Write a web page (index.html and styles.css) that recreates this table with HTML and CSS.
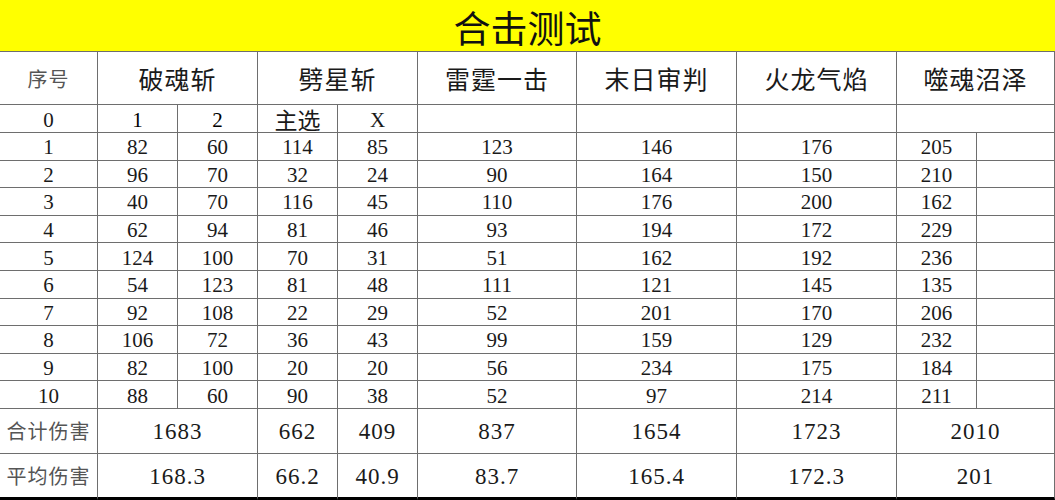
FILE: index.html
```html
<!DOCTYPE html>
<html lang="zh">
<head>
<meta charset="utf-8">
<title>合击测试</title>
<link rel="stylesheet" href="styles.css">
</head>
<body>
<div class="sheet">
  <div class="title">合击测试</div>
  <div class="grid">
    <div class="c lbl">序号</div>
    <div class="c hd s2">破魂斩</div>
    <div class="c hd s2">劈星斩</div>
    <div class="c hd">雷霆一击</div>
    <div class="c hd">末日审判</div>
    <div class="c hd">火龙气焰</div>
    <div class="c hd s2">噬魂沼泽</div>

    <div class="c n">0</div>
    <div class="c n b">1</div>
    <div class="c n b">2</div>
    <div class="c sub">主选</div>
    <div class="c n">X</div>
    <div class="c"></div>
    <div class="c"></div>
    <div class="c"></div>
    <div class="c s2"></div>

    <div class="c n">1</div><div class="c n">82</div><div class="c n">60</div><div class="c n">114</div><div class="c n">85</div><div class="c n">123</div><div class="c n">146</div><div class="c n">176</div><div class="c n">205</div><div class="c"></div>
    <div class="c n">2</div><div class="c n">96</div><div class="c n">70</div><div class="c n">32</div><div class="c n">24</div><div class="c n">90</div><div class="c n">164</div><div class="c n">150</div><div class="c n">210</div><div class="c"></div>
    <div class="c n">3</div><div class="c n">40</div><div class="c n">70</div><div class="c n">116</div><div class="c n">45</div><div class="c n">110</div><div class="c n">176</div><div class="c n">200</div><div class="c n">162</div><div class="c"></div>
    <div class="c n">4</div><div class="c n">62</div><div class="c n">94</div><div class="c n">81</div><div class="c n">46</div><div class="c n">93</div><div class="c n">194</div><div class="c n">172</div><div class="c n">229</div><div class="c"></div>
    <div class="c n">5</div><div class="c n">124</div><div class="c n">100</div><div class="c n">70</div><div class="c n">31</div><div class="c n">51</div><div class="c n">162</div><div class="c n">192</div><div class="c n">236</div><div class="c"></div>
    <div class="c n">6</div><div class="c n">54</div><div class="c n">123</div><div class="c n">81</div><div class="c n">48</div><div class="c n">111</div><div class="c n">121</div><div class="c n">145</div><div class="c n">135</div><div class="c"></div>
    <div class="c n">7</div><div class="c n">92</div><div class="c n">108</div><div class="c n">22</div><div class="c n">29</div><div class="c n">52</div><div class="c n">201</div><div class="c n">170</div><div class="c n">206</div><div class="c"></div>
    <div class="c n">8</div><div class="c n">106</div><div class="c n">72</div><div class="c n">36</div><div class="c n">43</div><div class="c n">99</div><div class="c n">159</div><div class="c n">129</div><div class="c n">232</div><div class="c"></div>
    <div class="c n">9</div><div class="c n">82</div><div class="c n">100</div><div class="c n">20</div><div class="c n">20</div><div class="c n">56</div><div class="c n">234</div><div class="c n">175</div><div class="c n">184</div><div class="c"></div>
    <div class="c n">10</div><div class="c n">88</div><div class="c n">60</div><div class="c n">90</div><div class="c n">38</div><div class="c n">52</div><div class="c n">97</div><div class="c n">214</div><div class="c n">211</div><div class="c"></div>

    <div class="c lbl">合计伤害</div>
    <div class="c n big s2">1683</div>
    <div class="c n big">662</div>
    <div class="c n big">409</div>
    <div class="c n big">837</div>
    <div class="c n big">1654</div>
    <div class="c n big">1723</div>
    <div class="c n big s2">2010</div>

    <div class="c lbl last">平均伤害</div>
    <div class="c n big s2 last">168.3</div>
    <div class="c n big last">66.2</div>
    <div class="c n big last">40.9</div>
    <div class="c n big last">83.7</div>
    <div class="c n big last">165.4</div>
    <div class="c n big last">172.3</div>
    <div class="c n big s2 last">201</div>
  </div>
</div>
</body>
</html>
```

FILE: styles.css
```css
* { box-sizing: border-box; }
html, body {
  margin: 0;
  padding: 0;
  background: #ffffff;
}
.sheet {
  width: 1055px;
  height: 500px;
  overflow: hidden;
}
.title {
  height: 51px;
  background: #ffff00;
  display: flex;
  align-items: center;
  justify-content: center;
  font-family: "Noto Sans CJK SC", sans-serif;
  font-size: 37px;
  color: #111;
  padding-top: 2px;
}
.grid {
  display: grid;
  grid-template-columns: 98px 80px 80px 80px 80px 159px 160px 160px 80px 78px;
  grid-template-rows: 53px 28px repeat(10, 27.6px) 45px 46px;
  border-top: 1px solid #6e6e6e;
}
.c {
  border-right: 1px solid #6e6e6e;
  border-bottom: 1px solid #6e6e6e;
  display: flex;
  align-items: center;
  justify-content: center;
  color: #1a1a1a;
  white-space: nowrap;
}
.s2 { grid-column: span 2; }
.hd {
  font-family: "Noto Sans CJK SC", sans-serif;
  font-size: 25px;
  letter-spacing: 1px;
  color: #1a1a1a;
}
.lbl {
  font-family: "Noto Sans CJK SC", sans-serif;
  font-size: 20px;
  color: #555;
  letter-spacing: 1px;
}
.sub {
  font-family: "Noto Sans CJK SC", sans-serif;
  font-size: 23px;
  color: #1a1a1a;
}
.n {
  font-family: "Liberation Serif", "Noto Sans CJK SC", serif;
  font-size: 21px;
  padding-top: 3px;
}
.big {
  font-size: 23px;
  letter-spacing: 1px;
}
.b { color: #000; }
.last { border-bottom: 3px solid #000; }
```
